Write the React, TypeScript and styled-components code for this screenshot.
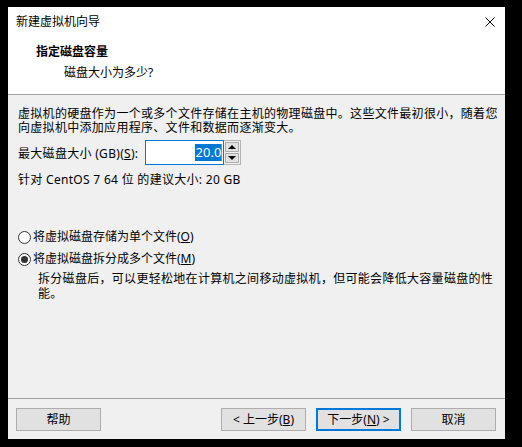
import React from "react";
import styled, { createGlobalStyle } from "styled-components";

const Global = createGlobalStyle`
  html, body { margin: 0; padding: 0; background: #000; }
  body { padding: 7px 0 0 8px; font-family: "Noto Sans", "Noto Sans CJK SC", sans-serif; font-size: 12px; color: #000; }
  * { box-sizing: border-box; }
`;

const Window = styled.div`
  width: 497px;
  height: 432px;
  background: #f0f0f0;
  display: flex;
  flex-direction: column;
`;

const TitleBar = styled.div`
  height: 30px;
  background: #fff;
  display: flex;
  align-items: center;
  justify-content: space-between;
  padding: 0 10px 0 8px;
  line-height: 14px;
`;

const CloseIcon = styled.svg`
  width: 10px;
  height: 10px;
  display: block;
`;

const Header = styled.div`
  height: 58px;
  background: #fff;
  border-bottom: 1px solid #a0a0a0;
  padding: 7px 0 0 28px;
`;

const HeaderTitle = styled.div`
  font-weight: bold;
  line-height: 16px;
`;

const HeaderSub = styled.div`
  line-height: 16px;
  margin-top: 5px;
  padding-left: 28px;
`;

const Content = styled.div`
  flex: 1;
  padding: 12px 10px 0 10px;
  display: flex;
  flex-direction: column;
`;

const Para = styled.p<{ $indent?: number }>`
  margin: 0;
  white-space: nowrap;
  line-height: ${(p) => (p.$indent ? 15 : 14)}px;
  padding-left: ${(p) => p.$indent || 0}px;
  letter-spacing: 0.3px;
`;

const SpinRow = styled.div`
  display: flex;
  align-items: center;
  height: 25px;
  margin-top: 5px;
  gap: 7px;
`;

const SpinLabel = styled.span`
  letter-spacing: 0.3px;
`;

const SpinBox = styled.div`
  display: flex;
  height: 25px;
`;

const SpinInput = styled.div`
  width: 79px;
  height: 25px;
  border: 1px solid #0078d7;
  background: #fff;
  display: flex;
  align-items: center;
  justify-content: flex-end;
  padding-right: 1px;
  font-size: 13px;
`;

const Selected = styled.span`
  background: #0078d7;
  color: #fff;
  line-height: 17px;
  padding: 0 0 0 1px;
  border-right: 1px solid #f07800;
`;

const SpinButtons = styled.div`
  width: 17px;
  border: 1px solid #b4b4b4;
  border-left: none;
  display: flex;
  flex-direction: column;
  background: #f0f0f0;
  padding: 1px;
  gap: 1px;
`;

const SpinBtn = styled.div`
  flex: 1;
  background: #e1e1e1;
  border: 1px solid #adadad;
  display: flex;
  align-items: center;
  justify-content: center;
`;

const Arrow = styled.div<{ $down?: boolean }>`
  width: 0;
  height: 0;
  border-left: 4px solid transparent;
  border-right: 4px solid transparent;
  ${(p) => (p.$down ? "border-top: 4px solid #000;" : "border-bottom: 4px solid #000;")}
`;

const Recommend = styled.div`
  margin-top: 8px;
  line-height: 14px;
  letter-spacing: 0.3px;
`;

const RadioGroup = styled.div`
  margin-top: 42px;
  display: flex;
  flex-direction: column;
  gap: 6px;
`;

const RadioRow = styled.label`
  display: flex;
  align-items: center;
  gap: 2px;
  line-height: 16px;
`;

const RadioCircle = styled.span<{ $checked?: boolean }>`
  width: 13px;
  height: 13px;
  border-radius: 50%;
  border: 1px solid #333;
  background: #fff;
  display: flex;
  align-items: center;
  justify-content: center;
  &::after {
    content: "";
    display: ${(p) => (p.$checked ? "block" : "none")};
    width: 7px;
    height: 7px;
    border-radius: 50%;
    background: #333;
  }
`;

const Desc = styled.div`
  margin-top: 4px;
`;

const U = styled.span`
  text-decoration: underline;
`;

const Footer = styled.div`
  border-top: 1px solid #a0a0a0;
  padding: 9px 9px 8px 8px;
  display: flex;
  gap: 10px;
`;

const Button = styled.div<{ $primary?: boolean; $push?: boolean }>`
  width: 85px;
  height: 23px;
  background: #e1e1e1;
  border: ${(p) => (p.$primary ? "2px solid #0078d7" : "1px solid #adadad")};
  display: flex;
  align-items: center;
  justify-content: center;
  line-height: 14px;
  margin-left: ${(p) => (p.$push ? "auto" : "0")};
  font-size: 12px;
`;

export default function App() {
  return (
    <>
      <Global />
      <Window>
        <TitleBar>
          <span>新建虚拟机向导</span>
          <CloseIcon viewBox="0 0 10 10">
            <path d="M0.5 0.5 L9.5 9.5 M9.5 0.5 L0.5 9.5" stroke="#000" strokeWidth="1" fill="none" />
          </CloseIcon>
        </TitleBar>
        <Header>
          <HeaderTitle>指定磁盘容量</HeaderTitle>
          <HeaderSub>磁盘大小为多少?</HeaderSub>
        </Header>
        <Content>
          <Para>
            虚拟机的硬盘作为一个或多个文件存储在主机的物理磁盘中。这些文件最初很小，随着您
            <br />
            向虚拟机中添加应用程序、文件和数据而逐渐变大。
          </Para>
          <SpinRow>
            <SpinLabel>
              最大磁盘大小 (GB)(<U>S</U>):
            </SpinLabel>
            <SpinBox>
              <SpinInput>
                <Selected>20.0</Selected>
              </SpinInput>
              <SpinButtons>
                <SpinBtn>
                  <Arrow />
                </SpinBtn>
                <SpinBtn>
                  <Arrow $down />
                </SpinBtn>
              </SpinButtons>
            </SpinBox>
          </SpinRow>
          <Recommend>针对 CentOS 7 64 位 的建议大小: 20 GB</Recommend>
          <RadioGroup>
            <RadioRow>
              <RadioCircle />
              <span>
                将虚拟磁盘存储为单个文件(<U>O</U>)
              </span>
            </RadioRow>
            <RadioRow>
              <RadioCircle $checked />
              <span>
                将虚拟磁盘拆分成多个文件(<U>M</U>)
              </span>
            </RadioRow>
          </RadioGroup>
          <Desc>
            <Para $indent={20}>
              拆分磁盘后，可以更轻松地在计算机之间移动虚拟机，但可能会降低大容量磁盘的性
              <br />
              能。
            </Para>
          </Desc>
        </Content>
        <Footer>
          <Button>帮助</Button>
          <Button $push>
            &lt; 上一步(<U>B</U>)
          </Button>
          <Button $primary>
            下一步(<U>N</U>) &gt;
          </Button>
          <Button>取消</Button>
        </Footer>
      </Window>
    </>
  );
}
